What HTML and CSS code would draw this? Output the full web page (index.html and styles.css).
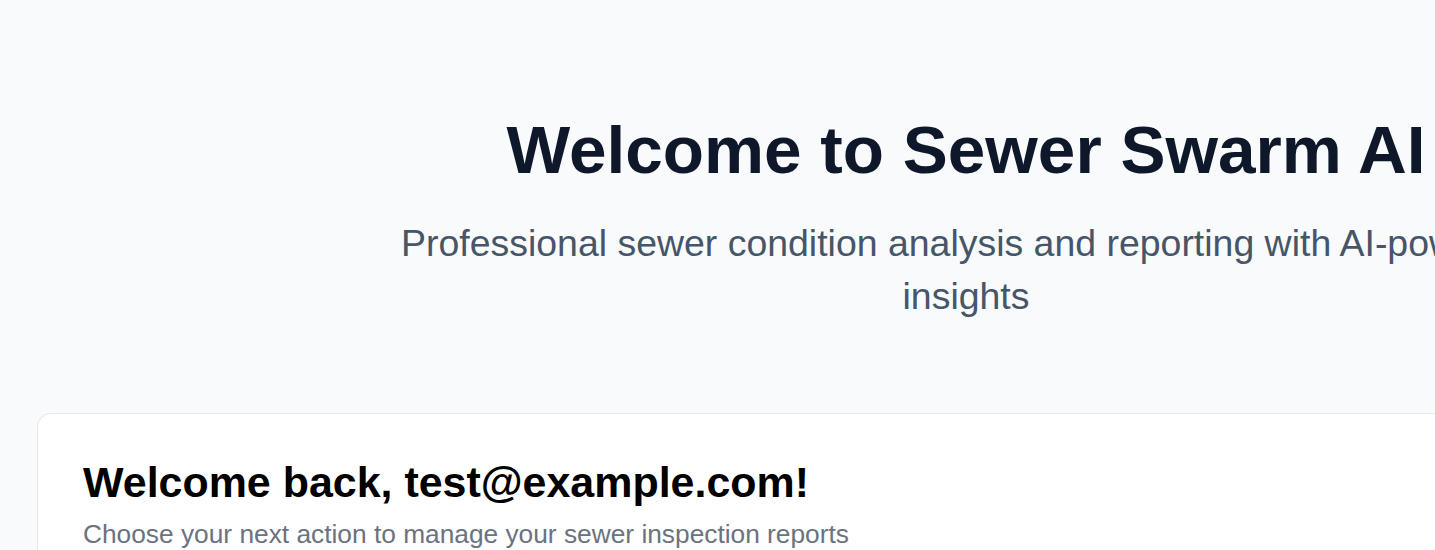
FILE: index.html
```html
<!DOCTYPE html>
<html lang="en">
<head>
<meta charset="utf-8">
<title>Sewer Swarm AI</title>
<link rel="stylesheet" href="styles.css">
</head>
<body>
  <div class="page">
    <section class="hero">
      <h1 class="hero-title">Welcome to Sewer Swarm AI</h1>
      <p class="hero-subtitle">Professional sewer condition analysis and reporting with AI-powered insights</p>
    </section>
    <section class="card">
      <h2 class="card-title">Welcome back, test@example.com!</h2>
      <p class="card-text">Choose your next action to manage your sewer inspection reports</p>
    </section>
  </div>
</body>
</html>
```

FILE: styles.css
```css
html, body {
  margin: 0;
  padding: 0;
  overflow: hidden;
}

body {
  background: #f8fafc;
  font-family: "Liberation Sans", Arial, sans-serif;
}

.page {
  width: 1932px;
  box-sizing: border-box;
  padding: 112px 37px 40px;
}

.hero {
  display: flex;
  flex-direction: column;
  align-items: center;
  text-align: center;
}

.hero-title {
  margin: 0;
  font-size: 67.5px;
  line-height: 76px;
  font-weight: 700;
  color: #0f172a;
}

.hero-subtitle {
  margin: 29px 0 0;
  width: 1150px;
  font-size: 37.45px;
  line-height: 53px;
  color: #475569;
}

.card {
  margin-top: 90px;
  background: #ffffff;
  border: 1px solid #e5e7eb;
  border-radius: 14px;
  padding: 42px 45px 45px;
}

.card-title {
  margin: 0;
  font-size: 42.95px;
  line-height: 52px;
  font-weight: 700;
  color: #000000;
}

.card-text {
  margin: 7.5px 0 0;
  font-size: 26.3px;
  line-height: 36px;
  color: #6b7280;
}
```
